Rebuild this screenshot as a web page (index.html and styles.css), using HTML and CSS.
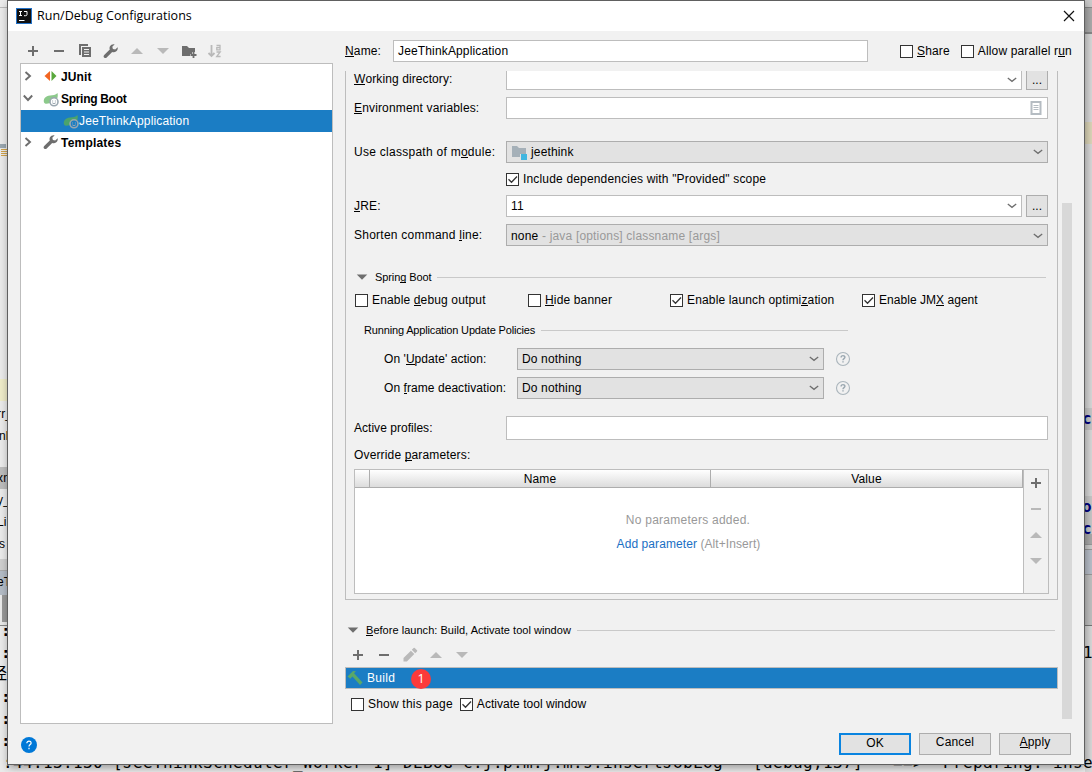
FILE: index.html
```html
<!DOCTYPE html>
<html lang="en">
<head>
<meta charset="utf-8">
<title>Run/Debug Configurations</title>
<link rel="stylesheet" href="styles.css">
</head>
<body>
<svg class="defs" width="0" height="0">
  <defs>
    <symbol id="plus" viewBox="0 0 16 16"><path d="M7 3h2v4h4v2H9v4H7V9H3V7h4z" fill="currentColor"/></symbol>
    <symbol id="minus" viewBox="0 0 16 16"><path d="M3 7h10v2H3z" fill="currentColor"/></symbol>
    <symbol id="up" viewBox="0 0 16 16"><path d="M2 11l6-6 6 6z" fill="currentColor"/></symbol>
    <symbol id="down" viewBox="0 0 16 16"><path d="M2 5h12l-6 6z" fill="currentColor"/></symbol>
    <symbol id="chev" viewBox="0 0 10 6"><path d="M.8 1L5 4.300 9.200 1" fill="none" stroke="#6e6e6e" stroke-width="1.300"/></symbol>
    <symbol id="tick" viewBox="0 0 11 11"><path d="M1.500 5.300L4.500 8.300 10 2.500" fill="none" stroke="#333" stroke-width="1.300"/></symbol>
    <symbol id="wrench" viewBox="0 0 16 16"><path d="M14.700 4.200l-2.500 2.400-2.300-.5-.6-2.300L11.700 1.300C9.800.8 7.900 1.600 7 3.200c-.6 1.100-.6 2.300-.2 3.400L1.200 12c-.8.800-.8 1.800-.1 2.500.8.800 1.900.7 2.600 0l5.500-5.600c1.300.5 2.900.3 4.100-.7 1.200-1 1.700-2.500 1.400-4z" fill="#6e6e6e"/></symbol>
    <symbol id="spring" viewBox="0 0 16 16"><path d="M1 11.500C0 8 2.500 5 7 4.600c3-.2 5.500-.8 7.500-2.600.5 2 .3 4-.4 5.800C10 5.500 7 8 7 12c-2 .8-3.800 1-5 .6z" fill="currentColor"/><circle cx="11" cy="10.800" r="4" fill="none" stroke="#9aa7b0" stroke-width="1.600"/><path d="M9.600 9.500v1M12.400 9.500v1M9.200 11.800q1.800 1.800 3.600 0" stroke="#9aa7b0" fill="none"/></symbol>
    <symbol id="ask" viewBox="0 0 16 16"><circle cx="8" cy="8" r="6.500" fill="none" stroke="#aab5bc" stroke-width="1.100"/><path d="M6.100 6.500C6.100 4 10 4.100 9.900 6.400 9.800 7.600 8 7.800 8 9.300M8 10.300v1.300" fill="none" stroke="#9aa7b0" stroke-width="1.400"/></symbol>
  </defs>
</svg>

<div class="desktop">
  <div class="edge left">
    <div class="l-top"></div>
    <div class="l-project"><svg width="7" height="14" viewBox="0 0 7 14"><path d="M0 0h6v4H0z" fill="#9aa7b0"/><path d="M1 5.500h6M1 7.500h6M1 9.500h6M1 11.500h6" stroke="#d0a24a"/></svg></div>
    <div class="l-line mark"></div>
    <div class="l-gap"></div>
    <div class="l-line in2">rr_</div><div class="l-line in1">nl</div><div class="l-blank"></div>
    <div class="l-line shade in2">xn</div><div class="l-line in2">y_</div><div class="l-line in2">Li</div><div class="l-line in1">s</div>
    <div class="l-bar"></div><div class="l-tab">eT</div><div class="l-tool"></div>
    <div class="l-con"><div>:</div><div>:</div><div class="cjk">经</div><div>:</div><div>:</div><div>:</div></div>
  </div>
  <div class="edge right">
    <div class="r-top"></div><div class="r-tabs"></div><div class="r-ed1"></div><div class="r-mark"></div><div class="r-ed2"></div>
    <div class="r-code">co</div><div class="r-ed3"></div><div class="r-code">or</div><div class="r-code r-clip">ct</div>
    <div class="r-bar"></div><div class="r-tab"></div><div class="r-tool"></div><div class="r-con">1</div>
  </div>
</div>
<div class="console">:44:13.130 [JeeThinkScheduler_Worker-1] DEBUG c.j.p.m.j.m.s.insertJobLog - [debug,137] - ==&gt;  Preparing: inse</div>

<div class="dialog">
  <header class="titlebar">
    <svg width="16" height="16" viewBox="0 0 16 16"><path d="M0 0h16v16H0z" fill="#2372c8"/><path d="M1 1h14v14H1z" fill="#111"/><path d="M3 3.500h3M4.500 3.500v4M3 7.500h3M8 3.500h3v3q0 1.200-1.500 1.200H8M3 12.500h5.500" stroke="#fff" fill="none"/></svg>
    <h1>Run/Debug Configurations</h1>
    <svg class="close" width="12" height="12" viewBox="0 0 12 12"><path d="M1 1l10 10M11 1L1 11" stroke="#111" stroke-width="1.200"/></svg>
  </header>
  <div class="main">
    <section class="side">
      <div class="tools">
        <svg class="i"><use href="#plus"/></svg><svg class="i"><use href="#minus"/></svg>
        <svg class="i" viewBox="0 0 16 16"><path d="M2 1h9v2H4v9H2z" fill="#6e6e6e"/><path d="M5 4h9v10H5z" fill="#6e6e6e"/><path d="M7 6.500h5M7 9h5M7 11.500h5" stroke="#f1f1f1"/></svg>
        <svg class="i"><use href="#wrench"/></svg>
        <svg class="i off"><use href="#up"/></svg><svg class="i off"><use href="#down"/></svg>
        <svg class="i" viewBox="0 0 16 16"><path d="M1 3h5l2 2h6v4h-3v2H9v2H1z" fill="#6e6e6e"/><path d="M12.500 9v6M9.500 12h6" stroke="#6e6e6e" stroke-width="1.800"/></svg>
        <svg class="i off" viewBox="0 0 16 16"><path d="M4.500 2v11M1.500 10l3 3 3-3" fill="none" stroke="currentColor" stroke-width="1.800"/><path d="M9.500 2.500H13v4.300H9.800V4.600H13M9.500 9h3.700l-3.500 4.500h3.900" fill="none" stroke="currentColor" stroke-width="1.300"/></svg>
      </div>
      <div class="tree">
        <div class="node"><svg class="arrow" viewBox="0 0 10 10"><path d="M2.500 1l4.500 4-4.500 4" fill="none" stroke="#6e6e6e" stroke-width="1.900"/></svg><svg class="ti raised" viewBox="0 0 16 16"><path d="M7 3v10L1.500 8z" fill="#f26522"/><path d="M8.500 3v10L13.500 8z" fill="#59a83c"/></svg><b>JUnit</b></div>
        <div class="node"><svg class="arrow" viewBox="0 0 10 10"><path d="M.8 2.500L5 7l4.200-4.500" fill="none" stroke="#6e6e6e" stroke-width="1.900"/></svg><svg class="ti green"><use href="#spring"/></svg><b class="sb">Spring Boot</b></div>
        <div class="node child"><svg class="ti dark"><use href="#spring"/></svg><span>JeeThinkApplication</span></div>
        <div class="node"><svg class="arrow" viewBox="0 0 10 10"><path d="M2.500 1l4.500 4-4.500 4" fill="none" stroke="#6e6e6e" stroke-width="1.900"/></svg><svg class="ti raised"><use href="#wrench"/></svg><b class="tp">Templates</b></div>
      </div>
    </section>

    <section class="content">
      <div class="namerow">
        <label><u>N</u>ame:</label><div class="field name">JeeThinkApplication</div>
        <div class="check share"><i></i><span><u>S</u>hare</span></div>
        <div class="check"><i></i><span>Allow parallel r<u>u</u>n</span></div>
      </div>
      <div class="scroll">
        <div class="pane">
          <div class="group">
            <div class="row wd"><label><u>W</u>orking directory:</label><div class="field grow"><svg class="chev"><use href="#chev"/></svg></div><button class="dots">...</button></div>
            <div class="row env"><label><u>E</u>nvironment variables:</label><div class="field grow"><svg class="doc" viewBox="0 0 12 14"><path d="M1.500 1h9v12h-9z" fill="#fff" stroke="#b5bcc2" stroke-width="2"/><path d="M3.500 4.500h5M3.500 6.500h5M3.500 8.500h5" stroke="#b5bcc2"/></svg></div></div>
            <div class="row cp"><label>Use classpath of m<u>o</u>dule:</label><div class="field combo grow"><svg class="mod" viewBox="0 0 16 16"><path d="M1 1h5l2 2h7v6H9v3H1z" fill="#a5b0b8"/><path d="M10 9h6v6h-6z" fill="#40b6e0"/></svg>jeethink<svg class="chev"><use href="#chev"/></svg></div></div>
            <div class="row dep"><div class="check"><i><svg><use href="#tick"/></svg></i><span class="deptext">Include dependencies with "Provided" scope</span></div></div>
            <div class="row jre"><label><u>J</u>RE:</label><div class="field grow">11<svg class="chev"><use href="#chev"/></svg></div><button class="dots">...</button></div>
            <div class="row sh"><label>Shorten command <u>l</u>ine:</label><div class="field combo grow low">none&nbsp;<span class="muted">- java [options] classname [args]</span><svg class="chev"><use href="#chev"/></svg></div></div>
            <div class="sep sbh"><svg class="tri"><use href="#down"/></svg><span>Sprin<u>g</u> Boot</span><hr></div>
            <div class="checks">
              <div class="check"><i></i><span>Enable <u>d</u>ebug output</span></div>
              <div class="check"><i></i><span><u>H</u>ide banner</span></div>
              <div class="check"><i><svg><use href="#tick"/></svg></i><span>Enable launch optimi<u>z</u>ation</span></div>
              <div class="check"><i><svg><use href="#tick"/></svg></i><span class="jmx">Enable JM<u>X</u> agent</span></div>
            </div>
            <div class="sep rap"><span>Running Application Update Policies</span><hr></div>
            <div class="row pol p1"><label>On '<u>U</u>pdate' action:</label><div class="field combo">Do nothing<svg class="chev"><use href="#chev"/></svg></div><svg class="i help"><use href="#ask"/></svg></div>
            <div class="row pol p2"><label>On <u>f</u>rame deactivation:</label><div class="field combo">Do nothing<svg class="chev"><use href="#chev"/></svg></div><svg class="i help"><use href="#ask"/></svg></div>
            <div class="row ap"><label>Active profiles:</label><div class="field grow tall"></div></div>
            <div class="ovr">Override <u>p</u>arameters:</div>
            <div class="table">
              <div class="tbody">
                <div class="thead"><div></div><div>Name</div><div>Value</div></div>
                <p class="muted none">No parameters added.</p>
                <p class="muted add"><a>Add parameter</a> (Alt+Insert)</p>
              </div>
              <div class="tside"><svg class="i"><use href="#plus"/></svg><svg class="i off"><use href="#minus"/></svg><svg class="i off"><use href="#up"/></svg><svg class="i off"><use href="#down"/></svg></div>
            </div>
          </div>
          <div class="sep bl"><svg class="tri"><use href="#down"/></svg><span><u>B</u>efore launch: Build, Activate tool window</span><hr></div>
          <div class="tools bt">
            <svg class="i"><use href="#plus"/></svg><svg class="i"><use href="#minus"/></svg>
            <svg class="i off" viewBox="0 0 16 16"><path d="M1.500 14.500v-3.400l7.400-7.400 3.400 3.400-7.400 7.400zM9.800 2.800L11.600 1q.6-.5 1.200 0L15 3.200q.5.600 0 1.200l-1.800 1.800z" fill="currentColor"/></svg>
            <svg class="i off"><use href="#up"/></svg><svg class="i off"><use href="#down"/></svg>
          </div>
          <div class="build"><svg class="hammer" viewBox="0 0 16 16"><path d="M.5 6.500L6 1l3 .3-2 2L15.500 12.500 13 15 5.500 6.500 3.200 8.800z" fill="#59a869"/></svg><span>Build</span><span class="badge">1</span></div>
          <div class="foot">
            <div class="check"><i></i><span>Show this page</span></div>
            <div class="check"><i><svg><use href="#tick"/></svg></i><span class="atw">Activate tool window</span></div>
          </div>
        </div>
        <div class="bar"></div>
      </div>
    </section>
  </div>
  <footer class="buttons">
    <svg class="bighelp" width="16" height="16" viewBox="0 0 16 16"><circle cx="8" cy="8" r="8" fill="#0078d7"/><path d="M5.800 6.200C5.800 3.300 10.200 3.400 10.100 6.100 10 7.500 8 7.700 8 9.500M8 10.700v1.500" fill="none" stroke="#fff" stroke-width="1.200"/></svg>
    <button class="btn ok">OK</button><button class="btn">Cancel</button><button class="btn"><u>A</u>pply</button>
  </footer>
</div>
</body>
</html>
```
FILE: styles.css
```css
* { box-sizing: border-box; }
body { margin: 0; width: 1092px; height: 772px; overflow: hidden; position: relative; background: #f2f2f2; font: 12px/14px "Liberation Sans", Arial, sans-serif; color: #000; letter-spacing: .15px; }
.defs { position: absolute; }
svg { display: block; flex: none; }
u { text-decoration: none; border-bottom: 1px solid currentColor; display: inline-block; height: 13px; line-height: 14px; }

/* Editor window behind the dialog */
.desktop { display: flex; justify-content: space-between; height: 772px; background: linear-gradient(#4f4b4b 0 1px, #ededed 1px); }
.edge { width: 7px; overflow: hidden; background: #ebebeb; }
.edge.right { background: #d9d9d9; }
.l-top { height: 8px; border-bottom: 1px solid #bbb; }
.l-project { height: 371px; padding-top: 136px; }
.l-line { height: 22px; line-height: 22px; white-space: nowrap; }
.in1 { text-indent: -1px; }
.in2 { text-indent: -3px; }
.mark { background: #efecc9; }
.l-gap { height: 2px; }
.l-blank { height: 20px; }
.shade { background: #bdbdbd; }
.l-bar { height: 12px; background: #cfcfcf; border-bottom: 1px solid #aaa; margin-top: 4px; }
.l-tab { height: 24px; line-height: 22px; background: #b4bcc6; text-indent: -3px; }
.l-tool { height: 31px; background: linear-gradient(#999, #999) 2px 0 / 5px 27px no-repeat; border-bottom: 1px solid #888; }
.l-con { font: 16px/22px "DejaVu Sans Mono", monospace; }
.l-con div { height: 22px; font-weight: bold; text-indent: 1px; line-height: 10px; }
.l-con .cjk { font-family: "Noto Sans CJK SC", sans-serif; font-weight: normal; text-indent: -9px; line-height: 4px; }
.r-top { height: 8px; border-bottom: 1px solid #888; background: #ccc; }
.r-tabs { height: 26px; background: #acacac; border-bottom: 2px solid #888; }
.r-ed1 { height: 88px; }
.r-mark { height: 22px; background: #ddd6b9; }
.r-ed2 { height: 264px; }
.r-code { height: 22px; background: #c8c8c8; color: #000080; font: bold 16px/22px "DejaVu Sans Mono", monospace; text-indent: -3px; }
.r-ed3 { height: 66px; }
.r-clip { height: 16px; overflow: hidden; }
.r-bar { height: 10px; background: #aaa; }
.r-tab { height: 51px; border-top: 1px solid #999; background: linear-gradient(#ccc 0 4px, #999 4px 5px, #b9bfca 5px 29px, #999 29px 30px, #c2c2c2 30px); }
.r-tool { height: 31px; background: #c2c2c2; border-bottom: 1px solid #777; }
.r-con { padding-top: 16px; font: 16px/22px "DejaVu Sans Mono", monospace; text-indent: -2px; }
.console { position: absolute; left: 3px; top: 752px; height: 20px; white-space: pre; font: 16px/22px "DejaVu Sans Mono", monospace; letter-spacing: .368px; }

/* Dialog window floating over the editor */
.dialog { position: absolute; left: 7px; top: 0; width: 1078px; height: 765px; border: 1px solid #606060; background: #f1f1f1; box-shadow: 1px 3px 8px rgba(0,0,0,.35); display: flex; flex-direction: column; }
.titlebar { height: 30px; background: #fff; display: flex; align-items: center; padding: 0 9px 0 8px; }
h1 { margin: 0 auto 0 5px; font: 12.500px/18px "Open Sans", "Noto Sans", sans-serif; letter-spacing: 0; }
.main { display: flex; height: 693px; }
.side { width: 325px; padding-left: 12px; }
.tools { height: 32px; display: flex; gap: 10px; padding: 12px 0 0 5px; }
.i { width: 16px; height: 16px; color: #6e6e6e; }
.off { color: #b9b9b9; }
.tree { height: 661px; background: #fff; border: 1px solid #bdbdbd; padding-top: 2px; }
.node { height: 22px; display: flex; align-items: center; padding-left: 2px; }
.arrow { width: 10px; height: 10px; margin-right: 10px; margin-top: -3px; }
.ti { width: 16px; height: 16px; margin-right: 2px; }
.raised { margin-top: -2px; }
.node b { letter-spacing: .1px; }
.node .sb { letter-spacing: -.3px; }
.node .tp { letter-spacing: .2px; }
.green { color: #8cc98b; }
.dark { color: #4ba36c; }
.child { background: #1b7dc4; color: #fff; padding-left: 42px; }
.child .ti { margin-right: 0; }

.content { width: 751px; padding-left: 12px; }
.namerow { display: flex; height: 40px; align-items: center; }
.namerow label { width: 48px; }
.field { height: 22px; border: 1px solid #bdbdbd; background: #fff; display: flex; align-items: center; padding: 0 4px; }
.field.name { width: 475px; }
.check { display: flex; align-items: center; height: 15px; white-space: nowrap; }
.check i { width: 13px; height: 13px; border: 1px solid #333; background: #fff; margin: 1px 4px 0 0; }
.check i svg { width: 11px; height: 11px; }
.share { margin: 0 11px 0 32px; }
.scroll { display: flex; justify-content: space-between; height: 648px; padding-right: 12px; }
.pane { width: 713px; }
.bar { width: 10px; height: 516px; margin-top: 132px; background: #d8d8d8; }
.group { height: 529px; border: 1px solid #bdbdbd; border-top: 0; padding: 0 9px 0 8px; display: flex; flex-direction: column; }
.row { display: flex; height: 22px; }
.row label { width: 152px; line-height: 23px; white-space: nowrap; }
.grow { flex: 1; }
.wd { height: 19px; }
.wd .field, .wd .dots { height: 19px; border-top: 0; }
.row.wd label { line-height: 17px; letter-spacing: .1px; }
.cp label { letter-spacing: .27px; }
.sh label { letter-spacing: .24px; }
.dots { width: 22px; height: 22px; margin-left: 4px; border: 1px solid #adadad; background: #e2e2e2; padding: 0; font: 12px/16px "Liberation Sans", Arial, sans-serif; }
.chev { width: 10px; height: 6px; margin-left: auto; }
.doc { width: 12px; height: 14px; margin: 0 1px 0 auto; }
.env { margin-top: 7px; }
.cp { margin-top: 22px; }
.combo { background: #e2e2e2; border-color: #adadad; }
.mod { width: 16px; height: 16px; margin-right: 4px; margin-top: 1px; }
.dep { padding-left: 152px; height: 15px; margin-top: 8px; }
.deptext { letter-spacing: .17px; }
.jre { margin-top: 9px; }
.sh { margin-top: 7px; }
.low { padding-top: 2px; letter-spacing: .18px; }
.muted { color: #999; }
.sep { display: flex; align-items: center; height: 14px; font-size: 11px; letter-spacing: .06px; white-space: nowrap; }
.sep hr { flex: 1; border: 0; height: 1px; background: #c9c9c9; margin: 0 0 0 6px; }
.tri { width: 14px; height: 14px; color: #6e6e6e; margin-right: 7px; }
.sbh { margin: 24px 2px 0 0; letter-spacing: -.1px; }
.sbh .tri { margin: 0 6px 0 1px; }
.checks { display: grid; grid-template-columns: 173px 142px 192px auto; margin: 8px 0 0 1px; }
.jmx { letter-spacing: .04px; }
.rap { margin: 16px 200px 0 10px; letter-spacing: -.16px; }
.pol { padding-left: 30px; }
.pol label { width: 133px; letter-spacing: .06px; }
.pol .combo { width: 307px; }
.help { margin: 3px 0 0 11px; }
.p1 { margin-top: 11px; }
.p2 { margin-top: 7px; }
.ap { margin-top: 17px; height: 24px; }
.tall { height: 24px; }
.row.ap label { line-height: 25px; letter-spacing: .03px; }
.ovr { margin-top: 8px; height: 21px; }
.table { width: 695px; height: 125px; border: 1px solid #bdbdbd; display: flex; }
.tbody { width: 669px; background: #fff; border-right: 1px solid #bdbdbd; text-align: center; }
.thead { height: 18px; display: grid; grid-template-columns: 15px 341px 312px; background: linear-gradient(#fff, #dcdcdc); border-bottom: 1px solid #adadad; line-height: 19px; margin-bottom: 25px; }
.thead div { border-right: 1px solid #adadad; height: 17px; }
.tbody p { margin: 0 0 10px; }
.tbody .none { letter-spacing: .25px; padding-right: 2px; }
.tbody .add { letter-spacing: .08px; padding-right: 1px; }
a { color: #1a6fc4; }
.tside { flex: 1; display: flex; flex-direction: column; gap: 10px; padding: 5px 0 0 4px; }
.bl { margin: 23px 3px 0 1px; letter-spacing: .03px; }
.bl .tri { margin-right: 6px; }
.bt { padding: 10px 0 0 5px; height: 30px; }
.build { height: 22px; background: #1b7dc4; border: 1px solid #bdbdbd; color: #fff; display: flex; align-items: center; font-size: 12px; letter-spacing: .3px; }
.hammer { width: 16px; height: 16px; margin: 0 4px 0 1px; }
.badge { width: 20px; height: 20px; margin: 2px 0 0 auto; margin-left: 16px; border-radius: 50%; background: #fb3a3a; text-align: center; line-height: 20px; font-family: "Open Sans", sans-serif; font-size: 12.500px; }
.foot { display: flex; gap: 7px; margin: 7px 0 0 6px; }
.foot .check:first-child span { letter-spacing: .2px; }
.foot .check .atw { letter-spacing: .03px; }
.buttons { display: flex; gap: 8px; padding: 9px 13px 0 13px; }
.bighelp { margin: 4px auto 0 0; }
.btn { width: 72px; height: 22px; border: 1px solid #adadad; background: #e2e2e2; padding: 0 0 4px; font: 12px/14px "Liberation Sans", Arial, sans-serif; letter-spacing: .15px; color: #000; }
.ok { border: 2px solid #0a84e0; padding-bottom: 3px; }
```
